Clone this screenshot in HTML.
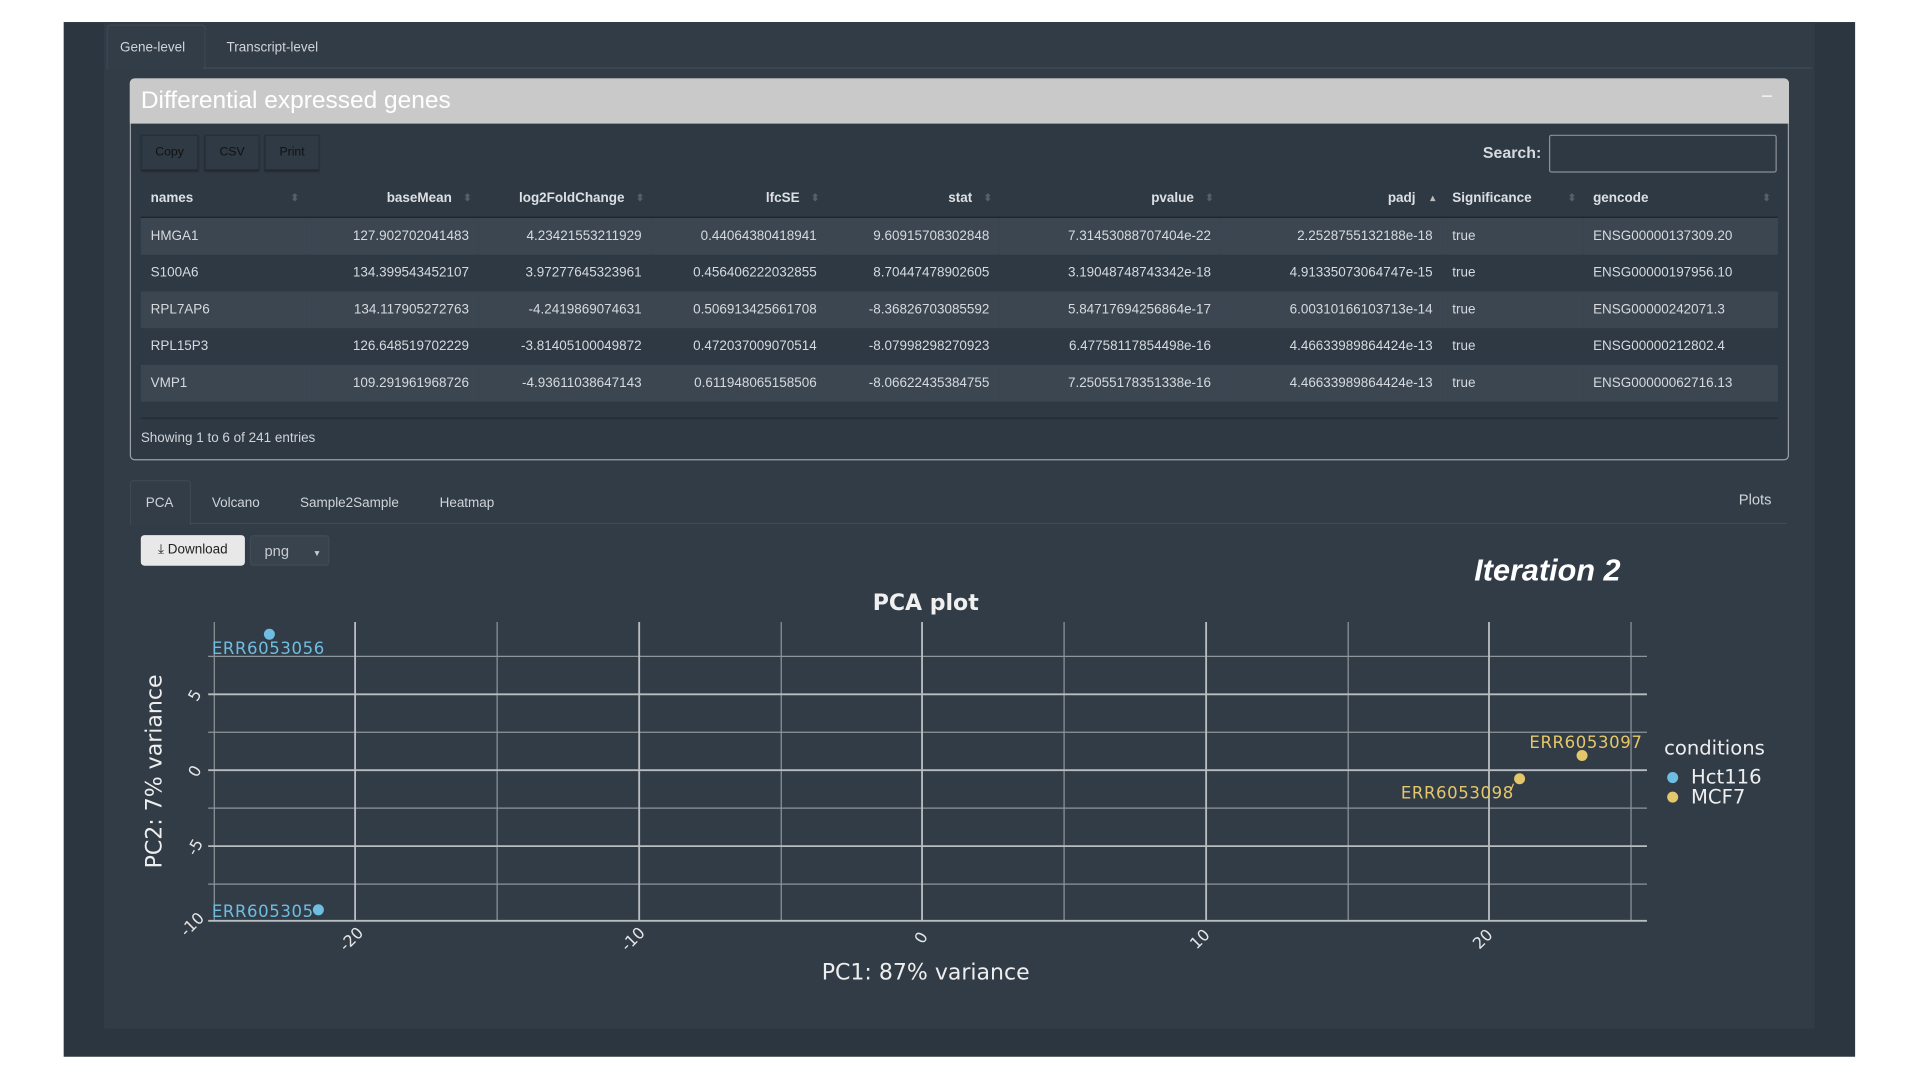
<!DOCTYPE html>
<html><head><meta charset="utf-8"><style>
html,body{margin:0;padding:0;background:#fff;width:1920px;height:1080px;overflow:hidden}
#w{position:absolute;left:0;top:0;width:1568px;height:882px;transform:scale(1.2245);transform-origin:0 0;font-family:"Liberation Sans",sans-serif}
.a{position:absolute}
.t{color:#d0d4d8;font-size:11px}
.r td{height:30px}
table{border-collapse:collapse;table-layout:fixed;position:absolute;left:115px;top:147px;width:1337px;font-size:11px;color:#d6dade}
th{font-weight:bold;height:30px;padding:0 22px 0 8px;border-bottom:1px solid #1f272e;color:#dde0e3;position:relative}
td{padding:0 8px;white-space:nowrap}
tbody tr:nth-child(odd){background:#3b4651}
.R{text-align:right}.L{text-align:left}
.s{color:#55606b;font-size:8px;position:absolute;right:6px;top:10px}
.btn{position:absolute;top:110px;height:27px;background:#2f3a44;border:1px solid #26303a;color:#111;font-size:10px;line-height:27px;text-align:center;box-shadow:0 1px 1px #222}
</style></head><body><div id="w">
<div class="a" style="left:52px;top:18px;width:1463px;height:845px;background:#2c3640"></div>
<div class="a" style="left:85px;top:18px;width:1397px;height:822px;background:#313c47"></div>
<div class="a" style="left:87px;top:20px;width:79px;height:36px;background:#323d48;border:1px solid #3d4853;border-bottom:none;border-radius:3px 3px 0 0"></div>
<div class="a" style="left:166px;top:55px;width:1314px;height:1px;background:#404b56"></div>
<div class="a t" style="left:98px;top:33px">Gene-level</div>
<div class="a t" style="left:185px;top:33px">Transcript-level</div>
<div class="a" style="left:106px;top:64px;width:1353px;height:310px;border:1px solid #9aa0a6;border-radius:4px;background:#2e3944"></div>
<div class="a" style="left:106px;top:64px;width:1355px;height:37px;background:#c9c9c9;border-radius:4px 4px 0 0"></div>
<div class="a" style="left:115px;top:71px;font-size:20px;color:#fff">Differential expressed genes</div>
<div class="a" style="left:1439px;top:78px;width:8px;height:1px;background:#fff"></div>
<div class="btn" style="left:115px;width:45px">Copy</div>
<div class="btn" style="left:167px;width:43px">CSV</div>
<div class="btn" style="left:216px;width:43px">Print</div>
<div class="a" style="left:1211px;top:117px;font-size:13px;font-weight:bold;color:#d6dade">Search:</div>
<div class="a" style="left:1265px;top:110px;width:184px;height:29px;border:1px solid #8a9096;border-radius:2px;background:#2e3944"></div>
<table>
<colgroup><col style="width:135px"><col style="width:141px"><col style="width:141px"><col style="width:143px"><col style="width:141px"><col style="width:181px"><col style="width:181px"><col style="width:115px"><col style="width:159px"></colgroup>
<thead><tr><th class="L">names<span class="s">⬍</span></th><th class="R">baseMean<span class="s">⬍</span></th><th class="R">log2FoldChange<span class="s">⬍</span></th><th class="R">lfcSE<span class="s">⬍</span></th><th class="R">stat<span class="s">⬍</span></th><th class="R">pvalue<span class="s">⬍</span></th><th class="R">padj<span class="s" style="color:#bbb">▴</span></th><th class="L">Significance<span class="s">⬍</span></th><th class="L">gencode<span class="s">⬍</span></th></tr></thead>
<tbody class="r">
<tr><td>HMGA1</td><td class="R">127.902702041483</td><td class="R">4.23421553211929</td><td class="R">0.44064380418941</td><td class="R">9.60915708302848</td><td class="R">7.31453088707404e-22</td><td class="R">2.2528755132188e-18</td><td>true</td><td>ENSG00000137309.20</td></tr>
<tr><td>S100A6</td><td class="R">134.399543452107</td><td class="R">3.97277645323961</td><td class="R">0.456406222032855</td><td class="R">8.70447478902605</td><td class="R">3.19048748743342e-18</td><td class="R">4.91335073064747e-15</td><td>true</td><td>ENSG00000197956.10</td></tr>
<tr><td>RPL7AP6</td><td class="R">134.117905272763</td><td class="R">-4.2419869074631</td><td class="R">0.506913425661708</td><td class="R">-8.36826703085592</td><td class="R">5.84717694256864e-17</td><td class="R">6.00310166103713e-14</td><td>true</td><td>ENSG00000242071.3</td></tr>
<tr><td>RPL15P3</td><td class="R">126.648519702229</td><td class="R">-3.81405100049872</td><td class="R">0.472037009070514</td><td class="R">-8.07998298270923</td><td class="R">6.47758117854498e-16</td><td class="R">4.46633989864424e-13</td><td>true</td><td>ENSG00000212802.4</td></tr>
<tr><td>VMP1</td><td class="R">109.291961968726</td><td class="R">-4.93611038647143</td><td class="R">0.611948065158506</td><td class="R">-8.06622435384755</td><td class="R">7.25055178351338e-16</td><td class="R">4.46633989864424e-13</td><td>true</td><td>ENSG00000062716.13</td></tr>
</tbody></table>
<div class="a" style="left:115px;top:341px;width:1337px;height:1px;background:#222a31"></div>
<div class="a t" style="left:115px;top:352px">Showing 1 to 6 of 241 entries</div>
<div class="a" style="left:106px;top:392px;width:48px;height:36px;background:#323d48;border:1px solid #3d4853;border-bottom:none;border-radius:3px 3px 0 0"></div>
<div class="a" style="left:155px;top:427px;width:1304px;height:1px;background:#404b56"></div>
<div class="a t" style="left:119px;top:405px">PCA</div>
<div class="a t" style="left:173px;top:405px">Volcano</div>
<div class="a t" style="left:245px;top:405px">Sample2Sample</div>
<div class="a t" style="left:359px;top:405px">Heatmap</div>
<div class="a t" style="left:1420px;top:401px;font-size:12px">Plots</div>
<div class="a" style="left:115px;top:437px;width:85px;height:25px;background:#e8e8e8;border-radius:3px;font-size:11px;line-height:25px;color:#222;text-align:center">⤓ Download</div>
<div class="a" style="left:204px;top:437px;width:65px;height:25px;background:#38434e;border-radius:3px;border:1px solid #404b56;font-size:12px;line-height:25px;color:#c8ccd0;padding-left:11px;box-sizing:border-box">png <span style="font-size:7px;margin-left:16px">▼</span></div>
<svg class="a" style="left:0;top:0" width="1560" height="878" font-family="DejaVu Sans, sans-serif">
<text x="1204" y="474" font-family="Liberation Sans" font-size="25" font-weight="bold" font-style="italic" fill="#fff">Iteration 2</text>
<text x="756" y="498" font-size="18" font-weight="bold" fill="#f0f0f0" text-anchor="middle">PCA plot</text>
<g stroke="#8e959b" stroke-width="1">
<line x1="175" y1="508" x2="175" y2="752"/><line x1="406" y1="508" x2="406" y2="752"/><line x1="638" y1="508" x2="638" y2="752"/><line x1="869" y1="508" x2="869" y2="752"/><line x1="1101" y1="508" x2="1101" y2="752"/><line x1="1332" y1="508" x2="1332" y2="752"/>
<line x1="170" y1="536" x2="1345" y2="536"/><line x1="170" y1="598" x2="1345" y2="598"/><line x1="170" y1="660" x2="1345" y2="660"/><line x1="170" y1="722" x2="1345" y2="722"/>
</g>
<g stroke="#b8bdc1" stroke-width="1.5">
<line x1="290" y1="508" x2="290" y2="752"/><line x1="522" y1="508" x2="522" y2="752"/><line x1="753" y1="508" x2="753" y2="752"/><line x1="985" y1="508" x2="985" y2="752"/><line x1="1216" y1="508" x2="1216" y2="752"/>
<line x1="170" y1="567" x2="1345" y2="567"/><line x1="170" y1="629" x2="1345" y2="629"/><line x1="170" y1="691" x2="1345" y2="691"/><line x1="170" y1="752" x2="1345" y2="752"/>
</g>
<g fill="#e6e6e6" font-size="13" text-anchor="middle">
<text transform="translate(163,570) rotate(-60)">5</text>
<text transform="translate(163,632) rotate(-60)">0</text>
<text transform="translate(163,694) rotate(-60)">-5</text>
<text transform="translate(160,758) rotate(-45)">-10</text>
<text transform="translate(290,770) rotate(-45)">-20</text>
<text transform="translate(520,770) rotate(-45)">-10</text>
<text transform="translate(756,768) rotate(-60)">0</text>
<text transform="translate(983,770) rotate(-45)">10</text>
<text transform="translate(1214,770) rotate(-45)">20</text>
</g>
<text x="756" y="800" font-size="18" fill="#eee" text-anchor="middle">PC1: 87% variance</text>
<text transform="translate(132,630) rotate(-90)" font-size="18" fill="#eee" text-anchor="middle">PC2: 7% variance</text>
<circle cx="220" cy="518" r="4.5" fill="#6fbde0"/><circle cx="260" cy="743" r="4.5" fill="#6fbde0"/>
<circle cx="1292" cy="617" r="4.5" fill="#e5c76b"/><circle cx="1241" cy="636" r="4.5" fill="#e5c76b"/>
<line x1="1236" y1="640" x2="1234" y2="645" stroke="#e5c76b"/>
<g font-size="13.5" letter-spacing=".5">
<text x="173" y="534" fill="#6fbde0">ERR6053056</text>
<text x="173" y="749" fill="#6fbde0">ERR605305</text>
<text x="1249" y="611" fill="#e5c76b">ERR6053097</text>
<text x="1144" y="652" fill="#e5c76b">ERR6053098</text>
</g>
<text x="1359" y="616" font-size="16" fill="#eee">conditions</text>
<circle cx="1366" cy="635" r="4.5" fill="#6fbde0"/><circle cx="1366" cy="651" r="4.5" fill="#e5c76b"/>
<text x="1381" y="640" font-size="16" fill="#eee">Hct116</text>
<text x="1381" y="656" font-size="16" fill="#eee">MCF7</text>
</svg>
</div></body></html>
